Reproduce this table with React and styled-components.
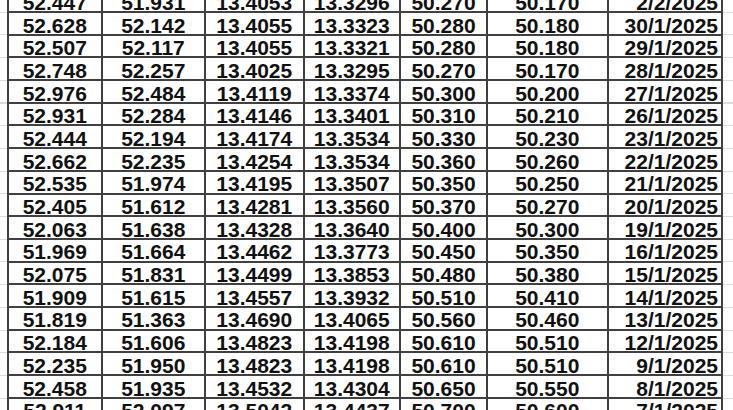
import React from "react";
import styled, { createGlobalStyle } from "styled-components";

const GlobalStyle = createGlobalStyle`
  html, body {
    margin: 0;
    padding: 0;
    background: #ffffff;
    overflow: hidden;
  }
  body {
    font-family: "Liberation Sans", Arial, sans-serif;
  }
`;

const Sheet = styled.div`
  width: 733px;
  height: 410px;
  overflow: hidden;
  background-color: #ffffff;
  background-image: repeating-linear-gradient(
    to bottom,
    transparent 0px,
    transparent 11.7px,
    #dcdcdc 11.7px,
    #dcdcdc 12.7px,
    transparent 12.7px,
    transparent 22.7px
  );
  background-position: 0 0;
`;

const Grid = styled.div`
  display: grid;
  grid-template-columns: 91.5px 101.5px 96.5px 94.5px 85px 118.5px 112.5px;
  grid-auto-rows: 20.7px;
  gap: 2px;
  width: max-content;
  margin: -9.7px 0 0 7px;
  padding: 0 2px;
  background: #404040;
`;

const Cell = styled.div`
  background: #ffffff;
  color: #111111;
  font-family: "Liberation Sans", Arial, sans-serif;
  font-weight: 700;
  font-size: 21px;
  line-height: 20.7px;
  padding-top: 2.5px;
  box-sizing: border-box;
  white-space: nowrap;
  overflow: hidden;
  text-align: ${(p) => (p.$right ? "right" : "center")};
  padding-right: ${(p) => (p.$right ? "3px" : "0")};
`;

const rows = [
  ["52.447", "51.931", "13.4053", "13.3296", "50.270", "50.170", "2/2/2025"],
  ["52.628", "52.142", "13.4055", "13.3323", "50.280", "50.180", "30/1/2025"],
  ["52.507", "52.117", "13.4055", "13.3321", "50.280", "50.180", "29/1/2025"],
  ["52.748", "52.257", "13.4025", "13.3295", "50.270", "50.170", "28/1/2025"],
  ["52.976", "52.484", "13.4119", "13.3374", "50.300", "50.200", "27/1/2025"],
  ["52.931", "52.284", "13.4146", "13.3401", "50.310", "50.210", "26/1/2025"],
  ["52.444", "52.194", "13.4174", "13.3534", "50.330", "50.230", "23/1/2025"],
  ["52.662", "52.235", "13.4254", "13.3534", "50.360", "50.260", "22/1/2025"],
  ["52.535", "51.974", "13.4195", "13.3507", "50.350", "50.250", "21/1/2025"],
  ["52.405", "51.612", "13.4281", "13.3560", "50.370", "50.270", "20/1/2025"],
  ["52.063", "51.638", "13.4328", "13.3640", "50.400", "50.300", "19/1/2025"],
  ["51.969", "51.664", "13.4462", "13.3773", "50.450", "50.350", "16/1/2025"],
  ["52.075", "51.831", "13.4499", "13.3853", "50.480", "50.380", "15/1/2025"],
  ["51.909", "51.615", "13.4557", "13.3932", "50.510", "50.410", "14/1/2025"],
  ["51.819", "51.363", "13.4690", "13.4065", "50.560", "50.460", "13/1/2025"],
  ["52.184", "51.606", "13.4823", "13.4198", "50.610", "50.510", "12/1/2025"],
  ["52.235", "51.950", "13.4823", "13.4198", "50.610", "50.510", "9/1/2025"],
  ["52.458", "51.935", "13.4532", "13.4304", "50.650", "50.550", "8/1/2025"],
  ["52.911", "52.097", "13.5042", "13.4437", "50.700", "50.600", "7/1/2025"],
];

export default function App() {
  return (
    <>
      <GlobalStyle />
      <Sheet>
        <Grid>
          {rows.map((r, i) =>
            r.map((v, j) => (
              <Cell key={`${i}-${j}`} $right={j === 6}>
                {v}
              </Cell>
            ))
          )}
        </Grid>
      </Sheet>
    </>
  );
}
